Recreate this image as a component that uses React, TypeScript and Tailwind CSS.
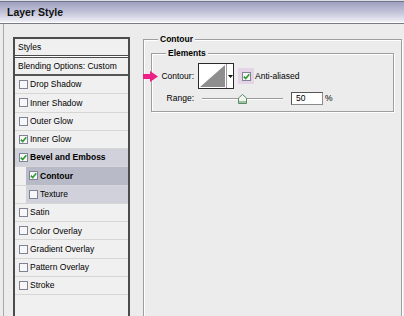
import React from 'react'

// ── Style list data ──────────────────────────────────────────────────────────

type StyleItem = {
  label: string
  checked?: boolean
  bold?: boolean
  indent?: boolean
  tone?: 'none' | 'light' | 'dark'
}

const items: StyleItem[] = [
  { label: 'Drop Shadow' },
  { label: 'Inner Shadow' },
  { label: 'Outer Glow' },
  { label: 'Inner Glow', checked: true },
  { label: 'Bevel and Emboss', checked: true, bold: true, tone: 'light' },
  { label: 'Contour', checked: true, bold: true, indent: true, tone: 'dark' },
  { label: 'Texture', indent: true, tone: 'light' },
  { label: 'Satin' },
  { label: 'Color Overlay' },
  { label: 'Gradient Overlay' },
  { label: 'Pattern Overlay' },
  { label: 'Stroke' },
]

function CheckBox({ checked }: { checked?: boolean }) {
  return (
    <span className="flex h-[9px] w-[9px] shrink-0 items-center justify-center border border-[#7f8394] bg-[#f7f7f9]">
      {checked && (
        <svg width="7" height="7" viewBox="0 0 7 7">
          <path d="M0.8 3.6 L2.7 5.6 L6.3 1.2" fill="none" stroke="#2f9a2f" strokeWidth="1.6" />
        </svg>
      )}
    </span>
  )
}

function StyleRow({ item }: { item: StyleItem }) {
  const bg =
    item.tone === 'dark' ? 'bg-[#b9bac7]' : item.tone === 'light' ? 'bg-[#d0d1da]' : ''
  return (
    <div className="flex h-[18.27px] border-b border-[#d6d6d6]">
      <div
        className={`flex flex-1 items-center gap-[2px] ${item.indent ? 'ml-[11px] pl-[3px]' : 'pl-[4px]'} ${bg} ${
          item.bold ? 'font-bold' : ''
        }`}
      >
        <CheckBox checked={item.checked} />
        <span>{item.label}</span>
      </div>
    </div>
  )
}

// ── Contour picker / slider bits ─────────────────────────────────────────────

function ContourPicker() {
  return (
    <div className="ml-[4px] flex h-[26px] w-[36px] border border-[#2b2b2b] bg-white">
      <svg width="27" height="24" viewBox="0 0 27 24" className="shrink-0">
        <polygon points="1,23 26,1 26,23" fill="#8e8e8e" />
      </svg>
      <div className="flex flex-1 items-center justify-center border-l border-[#9a9a9a]">
        <svg width="5" height="3" viewBox="0 0 5 3">
          <polygon points="0,0 5,0 2.5,3" fill="#111" />
        </svg>
      </div>
    </div>
  )
}

function Slider() {
  return (
    <div className="relative ml-[8px] h-[13px] w-[81px]">
      <div className="absolute left-0 right-0 top-[6px] h-[2px] border-t border-[#9a9a9a] border-b border-b-white" />
      <svg
        width="9"
        height="10"
        viewBox="0 0 9 10"
        className="absolute left-[36px] top-[2px]"
      >
        <path d="M0.5 4 L4.5 0.5 L8.5 4 L8.5 9.5 L0.5 9.5 Z" fill="#eef3ec" stroke="#5f8a67" />
        <rect x="1" y="7" width="7" height="2" fill="#9cc59e" />
      </svg>
    </div>
  )
}

// ── App ──────────────────────────────────────────────────────────────────────

export default function App() {
  return (
    <div className="h-[316px] w-[404px] overflow-hidden bg-[#ececec] font-['Liberation_Sans',Arial,sans-serif] text-[8.5px] leading-none text-black">
      {/* title bar */}
      <div className="h-[24px] bg-[#dcdce4] pt-[1px]">
        <div className="flex h-[23px] items-center border-t border-b border-t-[#72748a] border-b-[#7a7a86] bg-linear-to-b from-[#9ea0bf] via-[#c4c5da] to-[#f4f4f9] pl-[7px] shadow-[inset_0_-1px_0_#ffffff]">
          <span className="text-[10.5px] font-bold text-[#111]">Layer Style</span>
        </div>
      </div>

      <div className="ml-[3px] flex h-[292px] border-l border-[#a9a9a9]">
        {/* styles list */}
        <div className="pl-[9px] pt-[13px]">
          <div className="h-[300px] w-[117px] border-2 border-[#4c4c4c] bg-[#f0f0f0]">
            <div className="flex h-[16px] items-center pl-[3px]">Styles</div>
            <div className="h-[3px] border-y border-[#4c4c4c] bg-white" />
            <div className="flex h-[18px] items-center border-b-2 border-[#555] pl-[3px]">
              Blending Options: Custom
            </div>
            {items.map((it) => (
              <StyleRow key={it.label} item={it} />
            ))}
          </div>
        </div>

        {/* contour panel */}
        <div className="relative ml-[13px] flex-1 pt-[15px]">
          <div className="relative h-[300px] w-[259px] border border-[#9e9e9e] shadow-[inset_1px_1px_0_#ffffff,1px_1px_0_#ffffff]">
            <span className="absolute left-[14px] top-[-5px] bg-[#ececec] px-[2px] font-bold">Contour</span>

            <div className="relative mx-[7px] mt-[13px] h-[59px] border border-[#9e9e9e] shadow-[inset_1px_1px_0_#ffffff,1px_1px_0_#ffffff]">
              <span className="absolute left-[14px] top-[-5px] bg-[#ececec] px-[2px] font-bold">Elements</span>

              <div className="mt-[9px] flex items-center">
                <span className="w-[42px] text-right">Contour:</span>
                <ContourPicker />
                <div className="ml-[4px] flex h-[16px] w-[16px] items-center justify-center bg-[#e5d3e7]">
                  <CheckBox checked />
                </div>
                <span className="ml-[1px]">Anti-aliased</span>
              </div>

              <div className="mt-[3px] flex items-center">
                <span className="w-[42px] text-right">Range:</span>
                <Slider />
                <div className="ml-[8px] flex h-[13px] w-[32px] items-center border border-[#8a8a8a] border-l-[#555] border-t-[#555] bg-white pl-[4px]">
                  50
                </div>
                <span className="ml-[2px]">%</span>
              </div>
            </div>
          </div>

          {/* pink pointer arrow */}
          <svg
            width="15"
            height="11"
            viewBox="0 0 15 11"
            className="absolute left-[0px] top-[47px]"
          >
            <polygon points="0,3 7,3 7,0 15,5.5 7,11 7,8 0,8" fill="#ec1f86" />
          </svg>
        </div>
      </div>
    </div>
  )
}
